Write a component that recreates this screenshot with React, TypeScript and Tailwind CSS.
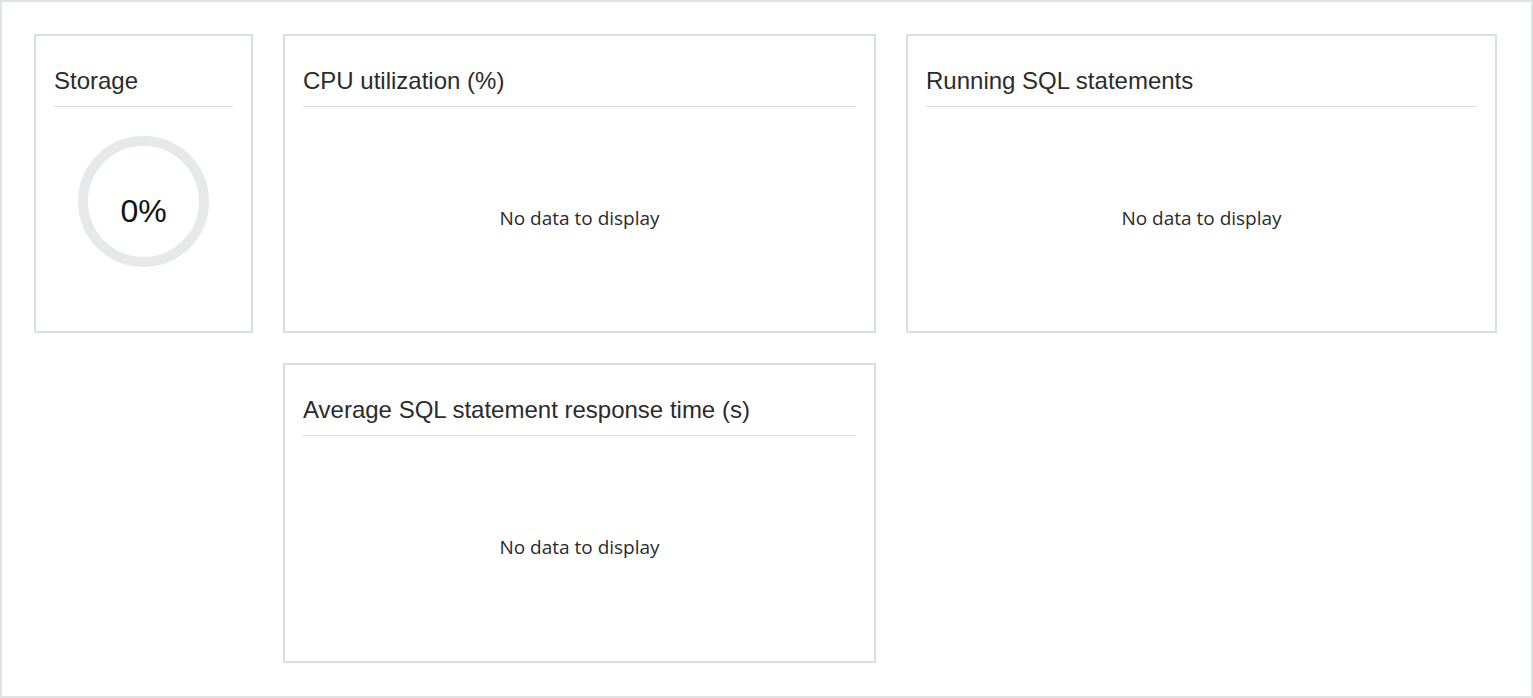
import React from "react";

function Card({ title, children }: { title: string; children: React.ReactNode }) {
  return (
    <div className="flex flex-col border-2 border-[#d9dfe0] bg-white px-[18px] pt-[31px]">
      <div className="border-b border-[#d9dcdc] pb-[11px] text-[24px] leading-[28px] text-[#2b2b2b]" style={{ fontFamily: '"Liberation Sans", Arial, sans-serif' }}>
        {title}
      </div>
      {children}
    </div>
  );
}

function NoData() {
  return (
    <div className="flex flex-1 items-center justify-center pb-[2px] text-[19px] text-[#2b2b2b]" style={{ fontFamily: '"Open Sans", "Noto Sans", sans-serif' }}>
      No data to display
    </div>
  );
}

export default function App() {
  return (
    <div className="h-[698px] w-[1533px] border-2 border-[#dfe3e3] bg-white p-[32px]">
      <div className="grid grid-cols-[219px_593px_591px] grid-rows-[299px_300px] gap-[30px]">
        <Card title="Storage">
          <div className="flex justify-center pt-[29px]">
            <div className="flex h-[131px] w-[131px] items-center justify-center rounded-full border-[10px] border-[#e6e9e9]">
              <span className="pt-[18px] text-[32px] leading-[36px] text-[#111]" style={{ fontFamily: '"Liberation Sans", Arial, sans-serif' }}>0%</span>
            </div>
          </div>
        </Card>
        <Card title="CPU utilization (%)">
          <NoData />
        </Card>
        <Card title="Running SQL statements">
          <NoData />
        </Card>
        <div />
        <Card title="Average SQL statement response time (s)">
          <NoData />
        </Card>
      </div>
    </div>
  );
}
